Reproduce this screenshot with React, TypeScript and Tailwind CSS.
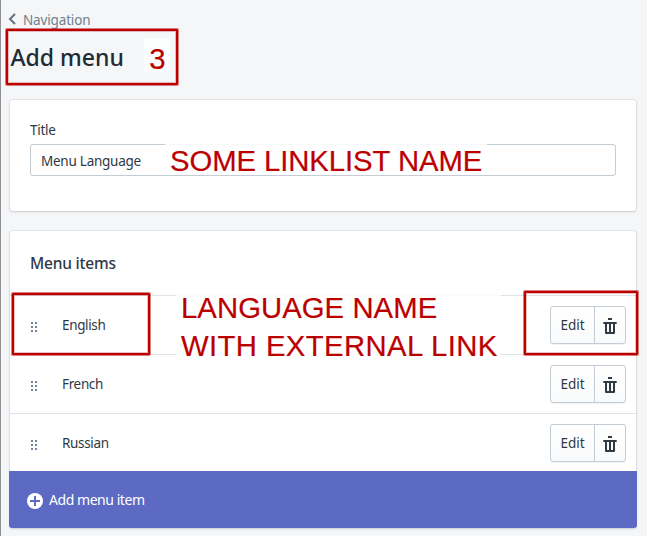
const items = ['English', 'French', 'Russian'];

function DragHandle() {
  return (
    <svg width="6" height="10" viewBox="0 0 6 10" fill="#748697" shapeRendering="crispEdges" className="mt-[4px] shrink-0">
      {[0, 4].map((x) => [0, 4, 8].map((y) => <rect key={`${x}-${y}`} x={x} y={y} width="2" height="2" />))}
    </svg>
  );
}

function Trash() {
  return (
    <svg width="14" height="16" viewBox="0 0 14 16" fill="#303a43">
      <path d="M5 0h4v2H5zM.3 4h13.4v2H12v9q0 1-1 1H3q-1 0-1-1V6H.3zM4 6v8h2V6zM8 6v8h2V6z" fillRule="evenodd" />
    </svg>
  );
}

function Row({ name }: { name: string }) {
  return (
    <div className="flex h-[59px] items-center gap-[25px] border-t border-[#dfe3e8] pr-[10px] pl-[21px]">
      <DragHandle />
      <span className="flex-1 text-[13.5px] tracking-[-0.35px]">{name}</span>
      <div className="flex h-[38px] w-[76px] rounded-[3px] border border-[#c4cdd5] bg-linear-to-b from-white to-[#f9fafb] shadow-[0_1px_0_rgba(22,29,37,0.05)]">
        <button className="w-[44px] border-r border-[#c4cdd5] text-[13.5px]">Edit</button>
        <button className="flex flex-1 items-center justify-center pt-[2px]"><Trash /></button>
      </div>
    </div>
  );
}

const frame = 'absolute rounded-[1px] border-2 border-[#bb0000] shadow-[0_0_0_1px_rgba(187,0,0,0.5),inset_0_0_0_1px_rgba(187,0,0,0.25)]';
const note = "absolute bg-white/85 font-['Liberation_Sans',sans-serif] text-[29.3px] whitespace-nowrap text-[#bb0000] [-webkit-text-stroke:0.2px_#bb0000]";

export default function App() {
  return (
    <div className="relative flex h-[536px] w-[647px] flex-col overflow-hidden border-l border-[#919195] bg-[#f4f6f8] pr-[11px] pl-[9px] font-['Noto_Sans',sans-serif] text-[#303943]">
      <div className="flex h-[39px] items-center gap-[6px] pt-px text-[13.5px] tracking-[-0.15px] text-[#717f8c]">
        <svg width="8" height="12" viewBox="0 0 8 12" fill="none" stroke="#637381" strokeWidth="2" className="-mt-[2px] -ml-[2px] mr-px"><path d="M7 1 2 6l5 5" /></svg>
        Navigation
      </div>
      <h1 className="h-[61px] pl-[0.5px] text-[23px] leading-[36px] font-medium text-[#212b36]">Add menu</h1>

      <main className="flex flex-col gap-[20px]">
        <section className="h-[111px] rounded-[3px] bg-white p-[20px] shadow-[0_0_0_1px_rgba(63,63,68,0.08),0_1px_3px_rgba(63,63,68,0.15)]">
          <label className="block h-[24px] text-[13.5px] leading-[20px] tracking-[-0.25px]">Title</label>
          <div className="flex h-[32px] items-center rounded-[3px] border border-[#c4cdd5] px-[10px] pt-[2px] text-[13.5px] tracking-[-0.25px]">Menu Language</div>
        </section>

        <section className="h-[297px] rounded-[3px] bg-white shadow-[0_0_0_1px_rgba(63,63,68,0.08),0_1px_3px_rgba(63,63,68,0.15)]">
          <h2 className="flex h-[64px] items-center px-[20px] pt-px text-[15.5px] font-medium tracking-[-0.2px]">Menu items</h2>
          {items.map((name) => <Row key={name} name={name} />)}
          <button className="-mx-px -mt-px flex h-[57px] w-[628px] items-center gap-[6px] rounded-b-[3px] bg-[#5c6ac4] px-[18px] text-[14px] tracking-[-0.45px] text-white">
            <svg width="16" height="16" viewBox="0 0 16 16" className="mt-[3px]"><circle cx="8" cy="8" r="8" fill="#fff" /><path d="M8 3v10M3 8h10" stroke="#5c6ac4" strokeWidth="2" /></svg>
            Add menu item
          </button>
        </section>
      </main>

      <div className={`${frame} top-[29px] left-[5px] h-[56px] w-[172px]`} />
      <div className={`${frame} top-[293px] left-[11px] h-[62px] w-[138px]`} />
      <div className={`${frame} top-[291px] left-[523px] h-[64px] w-[114px]`} />
      <div className={`${note} top-[38px] left-[143px] h-[34px] w-[26px] rounded-[2px] pl-px text-center leading-[41px]`}>3</div>
      <div className={`${note} top-[142px] left-[164px] h-[33px] w-[322px] pl-[5px] leading-[37px] tracking-[-0.08px]`}>SOME LINKLIST NAME</div>
      <div className={`${note} top-[289px] left-[175px] h-[72px] w-[325px] pl-[5px] leading-[38px]`}>
        <div className="tracking-[0.05px]">LANGUAGE NAME</div>
        <div className="tracking-[0.38px]">WITH EXTERNAL LINK</div>
      </div>
    </div>
  );
}
